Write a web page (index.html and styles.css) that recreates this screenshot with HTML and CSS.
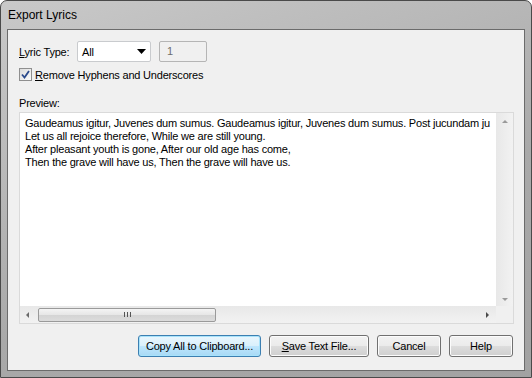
FILE: index.html
```html
<!DOCTYPE html>
<html lang="en">
<head>
  <meta charset="UTF-8" />
  <title>Export Lyrics</title>
  <link rel="stylesheet" href="styles.css">
</head>
<body>
  <div class="window">
    <div class="titlebar">Export Lyrics</div>
    <div class="client">
      <div class="row">
        <label class="lbl"><u>L</u>yric Type:</label>
        <div class="combo">
          <span>All</span>
          <svg width="9" height="5" viewBox="0 0 9 5"><polygon points="0,0 9,0 4.5,5" fill="#000"/></svg>
        </div>
        <div class="numbox">1</div>
      </div>
      <div class="checkrow">
        <span class="checkbox">
          <svg width="9" height="9" viewBox="0 0 9 9"><path d="M1 4.5 L3.5 7.5 L8 1" fill="none" stroke="#2b4a8c" stroke-width="1.8"/></svg>
        </span>
        <span><u>R</u>emove Hyphens and Underscores</span>
      </div>
      <div class="preview-label">Preview:</div>
      <div class="preview">
        <div class="preview-main">
          <div class="preview-text">
            <div>Gaudeamus igitur, Juvenes dum sumus. Gaudeamus igitur, Juvenes dum sumus. Post jucundam ju</div>
            <div>Let us all rejoice therefore, While we are still young.</div>
            <div>After pleasant youth is gone, After our old age has come,</div>
            <div>Then the grave will have us, Then the grave will have us.</div>
          </div>
          <div class="vscroll">
            <span class="arrow up"></span>
            <span class="arrow down"></span>
          </div>
        </div>
        <div class="hscroll">
          <span class="arrow left"></span>
          <div class="hthumb"><span class="grip"></span></div>
          <span class="arrow right"></span>
          <span class="corner"></span>
        </div>
      </div>
      <div class="buttons">
        <div class="btn focused">Copy All to Clipboard...</div>
        <div class="btn"><u>S</u>ave Text File...</div>
        <div class="btn small">Cancel</div>
        <div class="btn small">Help</div>
      </div>
    </div>
  </div>
</body>
</html>
```

FILE: styles.css
```css
body {
    margin: 0;
    background: #fff;
    font-family: "Liberation Sans", Arial, sans-serif;
    font-size: 11px;
    letter-spacing: -0.2px;
    color: #000;
}

.window {
    width: 532px;
    height: 378px;
    box-sizing: border-box;
    border: 1px solid #4a4a4a;
    border-radius: 7px 7px 0 0;
    background: linear-gradient(160deg, #c9c9c9 0%, #b9b9b9 30%, #a9a9a9 60%, #a2a2a2 100%);
    padding: 0 6px 6px 6px;
    display: flex;
    flex-direction: column;
}

.titlebar {
    height: 28px;
    line-height: 29px;
    padding-left: 1px;
    font-size: 12px;
    letter-spacing: 0;
    color: #000;
}

.client {
    flex: 1;
    border: 1px solid #6b6b6b;
    background: #f0f0f0;
    padding: 11px 11px 13px 11px;
    display: flex;
    flex-direction: column;
}

.row {
    display: flex;
    align-items: center;
    height: 21px;
}

.lbl {
    width: 58px;
}

.combo {
    width: 74px;
    height: 21px;
    box-sizing: border-box;
    border: 1px solid #c9cbce;
    border-radius: 2px;
    background: #fff;
    display: flex;
    align-items: center;
    justify-content: space-between;
    padding: 0 4px 0 4px;
}

.numbox {
    margin-left: 8px;
    width: 48px;
    height: 21px;
    box-sizing: border-box;
    border: 1px solid #b5b5b5;
    border-radius: 2px;
    background: #f0f0f0;
    color: #6d6d6d;
    padding-left: 7px;
    line-height: 19px;
}

.checkrow {
    display: flex;
    align-items: center;
    margin-top: 6px;
    height: 13px;
    gap: 3px;
}

.checkbox {
    width: 13px;
    height: 13px;
    box-sizing: border-box;
    border: 1px solid #8f8f8f;
    background: linear-gradient(135deg, #dcdcdc, #fbfbfb);
    display: flex;
    align-items: center;
    justify-content: center;
}

.preview-label {
    margin-top: 16px;
    height: 15px;
}

.preview {
    width: 495px;
    height: 212px;
    box-sizing: border-box;
    border: 1px solid #dadada;
    background: #fff;
    display: flex;
    flex-direction: column;
}

.preview-main {
    flex: 1;
    display: flex;
    overflow: hidden;
}

.preview-text {
    flex: 1;
    overflow: hidden;
    white-space: nowrap;
    padding: 4px 0 0 5px;
    line-height: 13px;
}

.vscroll {
    width: 17px;
    background: linear-gradient(90deg, #e8e8e8, #f2f2f2);
    display: flex;
    flex-direction: column;
    justify-content: space-between;
    align-items: center;
    padding: 7px 0 5px;
}

.hscroll {
    height: 17px;
    background: linear-gradient(180deg, #e8e8e8, #f2f2f2);
    display: flex;
    align-items: center;
}

.arrow {
    width: 0;
    height: 0;
    border: 3px solid transparent;
}

.arrow.up { border-bottom: 3px solid #9a9a9a; border-top-width: 0; }
.arrow.down { border-top: 3px solid #9a9a9a; border-bottom-width: 0; }
.arrow.left { border-right: 3px solid #6a6a6a; border-left-width: 0; margin: 0 9px 0 6px; }
.arrow.right { border-left: 3px solid #4a4a4a; border-right-width: 0; margin-left: auto; margin-right: 7px; }

.hthumb {
    width: 178px;
    height: 14px;
    box-sizing: border-box;
    border: 1px solid #9a9a9a;
    border-radius: 2px;
    background: linear-gradient(180deg, #f4f4f4 0%, #e6e6e6 50%, #d4d4d4 51%, #dcdcdc 100%);
    display: flex;
    align-items: center;
    justify-content: center;
}

.grip {
    width: 7px;
    height: 5px;
    background: repeating-linear-gradient(90deg, #555 0 1px, transparent 1px 3px);
}

.corner {
    width: 17px;
    height: 17px;
    background: #f0f0f0;
}

.buttons {
    margin-top: auto;
    display: flex;
    justify-content: flex-end;
    gap: 8px;
}

.btn {
    height: 22px;
    box-sizing: border-box;
    border: 1px solid #707070;
    border-radius: 3px;
    background: linear-gradient(180deg, #f2f2f2 0%, #ebebeb 50%, #dddddd 51%, #cfcfcf 100%);
    display: flex;
    align-items: center;
    justify-content: center;
    padding: 0 4px;
    white-space: nowrap;
    box-shadow: inset 0 0 0 1px #fcfcfc;
}

.btn.focused {
    width: 123px;
    border-color: #3c7fb1;
    background: linear-gradient(180deg, #eaf6fd 0%, #d9f0fc 50%, #bee6fd 51%, #a7d9f5 100%);
    box-shadow: inset 0 0 0 1px #a8e3fb;
}

.btn:nth-child(2) {
    width: 100px;
}

.btn.small {
    width: 64px;
}
```
